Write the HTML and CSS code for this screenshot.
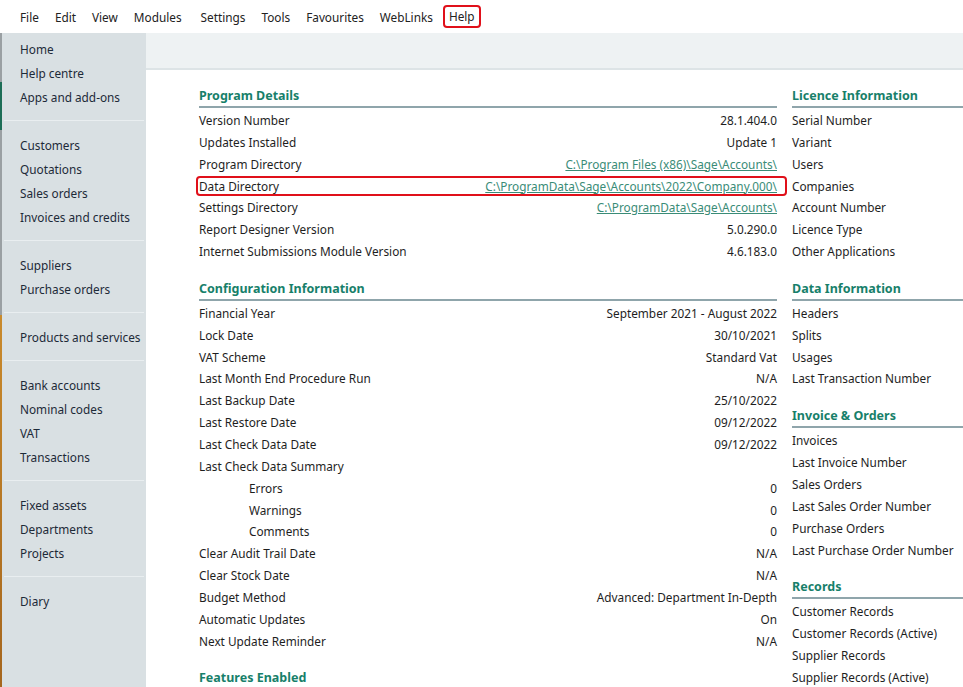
FILE: index.html
```html
<!DOCTYPE html>
<html lang="en">
<head>
  <meta charset="UTF-8" />
  <title>About - Program Details</title>
  <link rel="stylesheet" href="styles.css">
</head>
<body>
  <div class="menubar">
    <span class="menu-item">File</span>
    <span class="menu-item">Edit</span>
    <span class="menu-item">View</span>
    <span class="menu-item">Modules</span>
    <span class="menu-item menu-wide">Settings</span>
    <span class="menu-item">Tools</span>
    <span class="menu-item">Favourites</span>
    <span class="menu-item">WebLinks</span>
    <span class="menu-item menu-marked">Help</span>
  </div>

  <div class="app">
    <div class="edge-strip"></div>

    <nav class="sidebar">
      <div class="nav-item">Home</div>
      <div class="nav-item">Help centre</div>
      <div class="nav-item">Apps and add-ons</div>
      <div class="nav-sep"></div>
      <div class="nav-item">Customers</div>
      <div class="nav-item">Quotations</div>
      <div class="nav-item">Sales orders</div>
      <div class="nav-item">Invoices and credits</div>
      <div class="nav-sep"></div>
      <div class="nav-item">Suppliers</div>
      <div class="nav-item">Purchase orders</div>
      <div class="nav-sep"></div>
      <div class="nav-item">Products and services</div>
      <div class="nav-sep"></div>
      <div class="nav-item">Bank accounts</div>
      <div class="nav-item">Nominal codes</div>
      <div class="nav-item">VAT</div>
      <div class="nav-item">Transactions</div>
      <div class="nav-sep"></div>
      <div class="nav-item">Fixed assets</div>
      <div class="nav-item">Departments</div>
      <div class="nav-item">Projects</div>
      <div class="nav-sep"></div>
      <div class="nav-item">Diary</div>
    </nav>

    <main class="main">
      <div class="toolbar-strip"></div>

      <div class="content">
        <!-- left column -->
        <div class="col-left">
          <section class="section">
            <h2 class="section-title">Program Details</h2>
            <div class="row"><span>Version Number</span><span>28.1.404.0</span></div>
            <div class="row"><span>Updates Installed</span><span>Update 1</span></div>
            <div class="row"><span>Program Directory</span><a href="#">C:\Program Files (x86)\Sage\Accounts\</a></div>
            <div class="row row-marked"><span>Data Directory</span><a href="#">C:\ProgramData\Sage\Accounts\2022\Company.000\</a></div>
            <div class="row"><span>Settings Directory</span><a href="#">C:\ProgramData\Sage\Accounts\</a></div>
            <div class="row"><span>Report Designer Version</span><span>5.0.290.0</span></div>
            <div class="row"><span>Internet Submissions Module Version</span><span>4.6.183.0</span></div>
          </section>

          <section class="section">
            <h2 class="section-title">Configuration Information</h2>
            <div class="row"><span>Financial Year</span><span>September 2021 - August 2022</span></div>
            <div class="row"><span>Lock Date</span><span>30/10/2021</span></div>
            <div class="row"><span>VAT Scheme</span><span>Standard Vat</span></div>
            <div class="row"><span>Last Month End Procedure Run</span><span>N/A</span></div>
            <div class="row"><span>Last Backup Date</span><span>25/10/2022</span></div>
            <div class="row"><span>Last Restore Date</span><span>09/12/2022</span></div>
            <div class="row"><span>Last Check Data Date</span><span>09/12/2022</span></div>
            <div class="row"><span>Last Check Data Summary</span><span></span></div>
            <div class="row row-sub"><span>Errors</span><span>0</span></div>
            <div class="row row-sub"><span>Warnings</span><span>0</span></div>
            <div class="row row-sub"><span>Comments</span><span>0</span></div>
            <div class="row"><span>Clear Audit Trail Date</span><span>N/A</span></div>
            <div class="row"><span>Clear Stock Date</span><span>N/A</span></div>
            <div class="row"><span>Budget Method</span><span>Advanced: Department In-Depth</span></div>
            <div class="row"><span>Automatic Updates</span><span>On</span></div>
            <div class="row"><span>Next Update Reminder</span><span>N/A</span></div>
          </section>

          <section class="section">
            <h2 class="section-title">Features Enabled</h2>
          </section>
        </div>

        <!-- right column -->
        <div class="col-right">
          <section class="section">
            <h2 class="section-title">Licence Information</h2>
            <div class="row"><span>Serial Number</span></div>
            <div class="row"><span>Variant</span></div>
            <div class="row"><span>Users</span></div>
            <div class="row"><span>Companies</span></div>
            <div class="row"><span>Account Number</span></div>
            <div class="row"><span>Licence Type</span></div>
            <div class="row"><span>Other Applications</span></div>
          </section>

          <section class="section">
            <h2 class="section-title">Data Information</h2>
            <div class="row"><span>Headers</span></div>
            <div class="row"><span>Splits</span></div>
            <div class="row"><span>Usages</span></div>
            <div class="row"><span>Last Transaction Number</span></div>
          </section>

          <section class="section">
            <h2 class="section-title">Invoice &amp; Orders</h2>
            <div class="row"><span>Invoices</span></div>
            <div class="row"><span>Last Invoice Number</span></div>
            <div class="row"><span>Sales Orders</span></div>
            <div class="row"><span>Last Sales Order Number</span></div>
            <div class="row"><span>Purchase Orders</span></div>
            <div class="row"><span>Last Purchase Order Number</span></div>
          </section>

          <section class="section">
            <h2 class="section-title">Records</h2>
            <div class="row"><span>Customer Records</span></div>
            <div class="row"><span>Customer Records (Active)</span></div>
            <div class="row"><span>Supplier Records</span></div>
            <div class="row"><span>Supplier Records (Active)</span></div>
          </section>
        </div>
      </div>
    </main>
  </div>
</body>
</html>
```

FILE: styles.css
```css
html, body {
  height: 100%;
}

body {
  margin: 0;
  font-family: 'Noto Sans', 'Open Sans', sans-serif;
  font-size: 11.8px;
  color: #1e1e1e;
  background-color: #ffffff;
  overflow: hidden;
}

/* top menu */
.menubar {
  height: 33px;
  display: flex;
  align-items: center;
  gap: 16px;
  padding-left: 20px;
  box-sizing: border-box;
  background-color: #ffffff;
}

.menu-item {
  color: #222222;
}

.menu-wide {
  margin-left: 3px;
}

.menu-marked {
  padding: 1px 4px 2px;
  margin-left: -6px;
  border: 2px solid #e0101a;
  border-radius: 4px;
}

/* app area */
.app {
  display: flex;
  height: calc(100% - 33px);
}

.edge-strip {
  width: 2px;
  flex-shrink: 0;
  background: linear-gradient(to bottom,
    #9aa0a3 0, #9aa0a3 49px,
    #1d6e57 49px, #1d6e57 97px,
    #9aa0a3 97px, #9aa0a3 282px,
    #c98a2c 282px, #a5661e 100%);
}

.sidebar {
  width: 144px;
  flex-shrink: 0;
  padding-top: 4px;
  background-color: #d9e0e3;
  color: #1d2a38;
}

.nav-item {
  height: 24px;
  line-height: 24px;
  padding-left: 18px;
}

.nav-sep {
  height: 24px;
  position: relative;
}

.nav-sep::after {
  content: "";
  position: absolute;
  left: 2px;
  right: 2px;
  top: 11px;
  height: 1px;
  background-color: #e9eef0;
}

.main {
  flex: 1;
  min-width: 0;
}

.toolbar-strip {
  height: 35px;
  background-color: #eef2f3;
  border-bottom: 2px solid #dde4e6;
}

.content {
  display: flex;
  gap: 15px;
  padding: 1px 0 0 53px;
}

.col-left {
  width: 578px;
  flex-shrink: 0;
}

.col-right {
  width: 220px;
  flex-shrink: 0;
}

.section {
  margin-top: 16px;
}

.section:first-child {
  margin-top: 15px;
}

.section-title {
  margin: 0 0 2px;
  height: 20px;
  line-height: 20px;
  font-size: 12.5px;
  font-weight: bold;
  color: #17806a;
  border-bottom: 2px solid #8fa5ab;
}

.row {
  display: flex;
  justify-content: space-between;
  height: 21.85px;
  line-height: 21.85px;
  white-space: nowrap;
}

.row-sub {
  padding-left: 50px;
}

.row a {
  color: #3a8c77;
  text-decoration: underline;
}

.row-marked {
  position: relative;
}

.row-marked::after {
  content: "";
  position: absolute;
  left: -3px;
  right: -10px;
  top: 0;
  bottom: 1px;
  border: 2px solid #e0101a;
  border-radius: 4px;
}
```
